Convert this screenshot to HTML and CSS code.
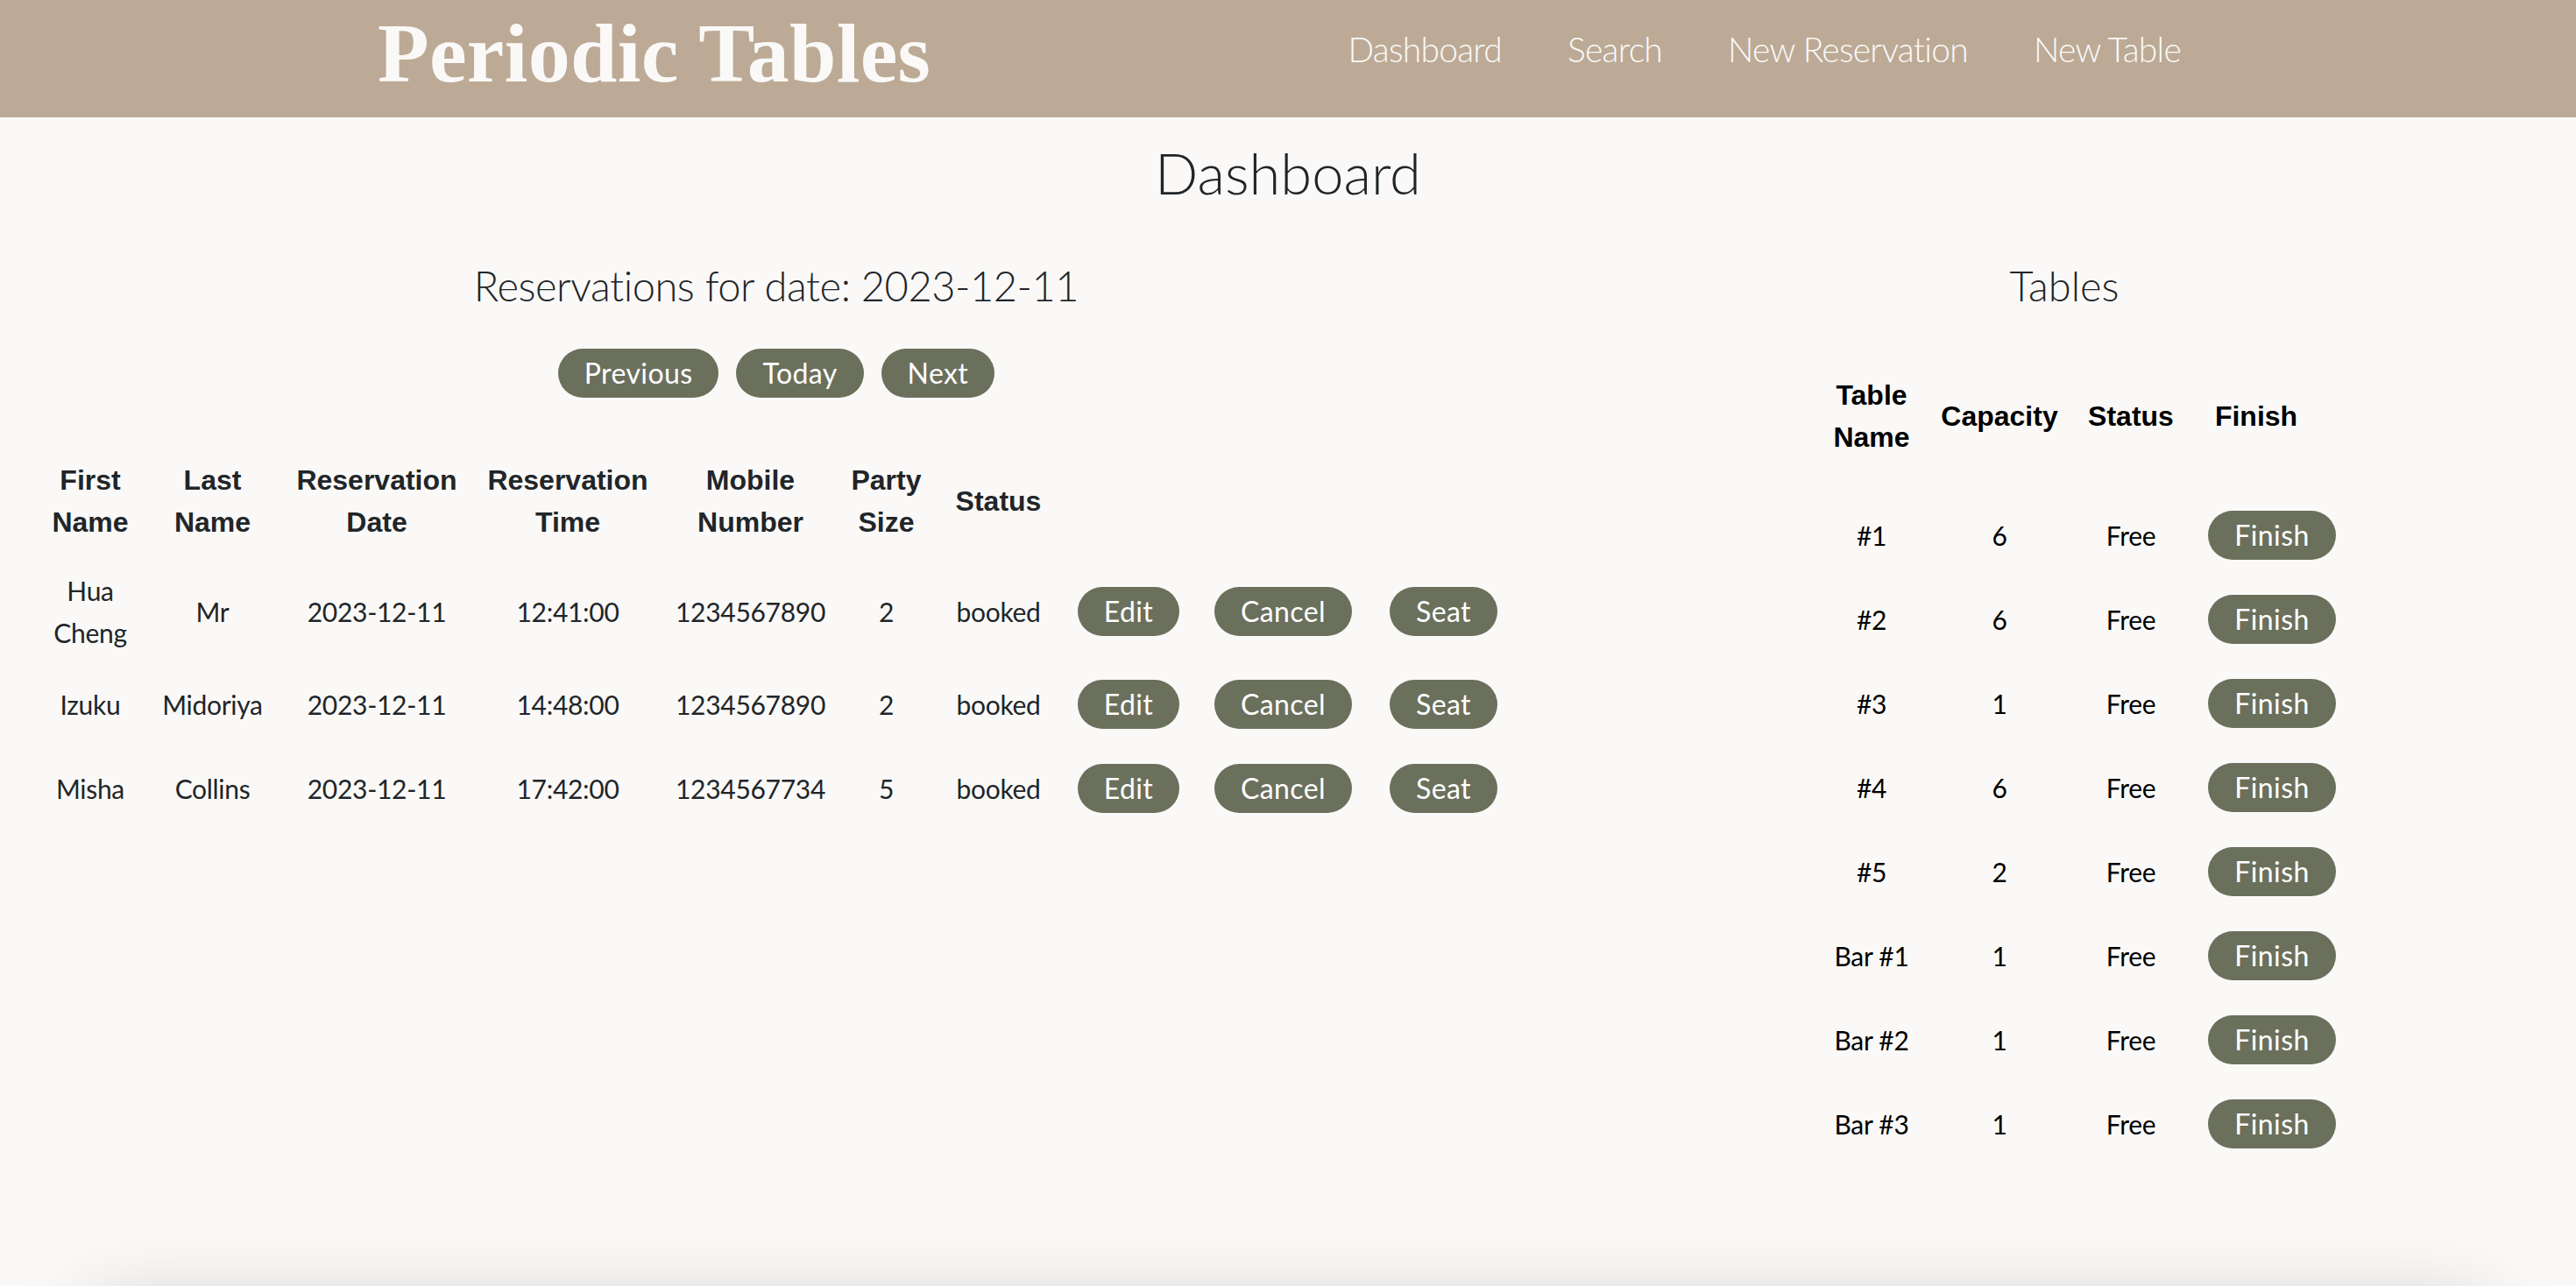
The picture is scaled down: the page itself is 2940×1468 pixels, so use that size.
FILE: index.html
```html
<!DOCTYPE html>
<html lang="en">
<head>
<meta charset="utf-8">
<title>Periodic Tables</title>
<link rel="stylesheet" href="styles.css">
</head>
<body>
<header class="navbar">
  <div class="brand">Periodic Tables</div>
  <nav class="nav-links">
    <a class="nav-link" href="#">Dashboard</a>
    <a class="nav-link" href="#">Search</a>
    <a class="nav-link" href="#">New Reservation</a>
    <a class="nav-link" href="#">New Table</a>
  </nav>
</header>
<main class="page">
  <h1 class="page-title">Dashboard</h1>
  <div class="columns">
    <section class="col-res">
      <h2 class="section-title">Reservations for date: 2023-12-11</h2>
      <div class="date-nav">
        <button class="btn">Previous</button>
        <button class="btn">Today</button>
        <button class="btn">Next</button>
      </div>
      <table class="res-table">
        <colgroup>
          <col class="rc1"><col class="rc2"><col class="rc3"><col class="rc4"><col class="rc5">
          <col class="rc6"><col class="rc7"><col class="rc8"><col class="rc9"><col class="rc10">
        </colgroup>
        <thead>
          <tr>
            <th>First Name</th><th>Last Name</th><th>Reservation Date</th><th>Reservation Time</th>
            <th>Mobile Number</th><th>Party Size</th><th>Status</th><th></th><th></th><th></th>
          </tr>
        </thead>
        <tbody>
          <tr class="first-row">
            <td>Hua Cheng</td><td>Mr</td><td>2023-12-11</td><td>12:41:00</td><td>1234567890</td><td>2</td><td>booked</td>
            <td><button class="btn cell-btn">Edit</button></td>
            <td><button class="btn cell-btn">Cancel</button></td>
            <td><button class="btn cell-btn">Seat</button></td>
          </tr>
          <tr>
            <td>Izuku</td><td>Midoriya</td><td>2023-12-11</td><td>14:48:00</td><td>1234567890</td><td>2</td><td>booked</td>
            <td><button class="btn cell-btn">Edit</button></td>
            <td><button class="btn cell-btn">Cancel</button></td>
            <td><button class="btn cell-btn">Seat</button></td>
          </tr>
          <tr>
            <td>Misha</td><td>Collins</td><td>2023-12-11</td><td>17:42:00</td><td>1234567734</td><td>5</td><td>booked</td>
            <td><button class="btn cell-btn">Edit</button></td>
            <td><button class="btn cell-btn">Cancel</button></td>
            <td><button class="btn cell-btn">Seat</button></td>
          </tr>
        </tbody>
      </table>
    </section>
    <section class="col-tables">
      <h2 class="section-title">Tables</h2>
      <table class="tables-table">
        <colgroup>
          <col class="tc1"><col class="tc2"><col class="tc3"><col class="tc4">
        </colgroup>
        <thead>
          <tr><th>Table Name</th><th>Capacity</th><th>Status</th><th class="finish-head">Finish</th></tr>
        </thead>
        <tbody>
          <tr><td>#1</td><td>6</td><td>Free</td><td class="finish-cell"><button class="btn cell-btn">Finish</button></td></tr>
          <tr><td>#2</td><td>6</td><td>Free</td><td class="finish-cell"><button class="btn cell-btn">Finish</button></td></tr>
          <tr><td>#3</td><td>1</td><td>Free</td><td class="finish-cell"><button class="btn cell-btn">Finish</button></td></tr>
          <tr><td>#4</td><td>6</td><td>Free</td><td class="finish-cell"><button class="btn cell-btn">Finish</button></td></tr>
          <tr><td>#5</td><td>2</td><td>Free</td><td class="finish-cell"><button class="btn cell-btn">Finish</button></td></tr>
          <tr><td>Bar #1</td><td>1</td><td>Free</td><td class="finish-cell"><button class="btn cell-btn">Finish</button></td></tr>
          <tr><td>Bar #2</td><td>1</td><td>Free</td><td class="finish-cell"><button class="btn cell-btn">Finish</button></td></tr>
          <tr><td>Bar #3</td><td>1</td><td>Free</td><td class="finish-cell"><button class="btn cell-btn">Finish</button></td></tr>
        </tbody>
      </table>
    </section>
  </div>
</main>
<footer class="footer"></footer>
</body>
</html>
```

FILE: styles.css
```css
html, body {
  margin: 0;
  padding: 0;
}
body {
  background: #faf9f7;
  color: #212529;
  font-family: Lato, "Open Sans", sans-serif;
  overflow-x: hidden;
}

/* Navbar */
.navbar {
  height: 134px;
  background: #bcaa96;
  display: flex;
  align-items: flex-start;
  padding: 0 451px 0 431px;
}
.brand {
  margin-top: 13px;
  font-family: "Liberation Serif", "Times New Roman", serif;
  font-weight: 700;
  font-size: 96px;
  line-height: 96px;
  letter-spacing: 0.3px;
  color: #faf9f7;
  white-space: nowrap;
}
.nav-links {
  margin-left: auto;
  margin-top: 33px;
  display: flex;
  gap: 75px;
}
.nav-link {
  font-family: Lato, sans-serif;
  font-weight: 300;
  font-size: 39px;
  line-height: 1.2;
  letter-spacing: -0.75px;
  color: #fbfaf8;
  text-decoration: none;
  white-space: nowrap;
}

/* Main */
.page {
  min-height: calc(100vh - 134px);
}
.page-title {
  margin: 24px 0 0;
  text-align: center;
  font-family: Lato, sans-serif;
  font-weight: 300;
  font-size: 65px;
  line-height: 1.2;
  color: #212529;
}
.columns {
  display: flex;
  margin-top: 62px;
}
.col-res {
  flex: 0 0 1772px;
}
.col-tables {
  flex: 1 1 auto;
}
.section-title {
  margin: 0;
  text-align: center;
  font-family: Lato, sans-serif;
  font-weight: 300;
  font-size: 47px;
  line-height: 1.2;
  color: #212529;
}
.col-res .section-title {
  letter-spacing: -0.45px;
}

/* Buttons */
.btn {
  height: 56px;
  padding: 0 30px;
  border: none;
  border-radius: 28px;
  background: #6b705c;
  color: #ffffff;
  font-family: Lato, sans-serif;
  font-size: 32px;
  line-height: 56px;
  letter-spacing: 0.4px;
  cursor: pointer;
}
.date-nav {
  margin-top: 44px;
  display: flex;
  justify-content: center;
  gap: 20px;
}
.cell-btn {
  display: block;
  width: fit-content;
  margin: 5px auto;
}

/* Tables */
table {
  border-collapse: collapse;
  table-layout: fixed;
}
th {
  font-family: "Liberation Sans", Arial, sans-serif;
  font-weight: 700;
  font-size: 32px;
  line-height: 48px;
  padding: 15px 12px;
  text-align: center;
  vertical-align: middle;
}
td {
  font-family: Lato, sans-serif;
  font-size: 30px;
  line-height: 48px;
  padding: 15px 12px;
  text-align: center;
  vertical-align: middle;
  letter-spacing: -0.3px;
}

.res-table {
  width: 1688px;
  margin: 55px 0 0 42px;
  color: #212529;
}
.res-table .first-row td {
  padding-bottom: 10px;
}
.rc1 { width: 122px; }
.rc2 { width: 157px; }
.rc3 { width: 218px; }
.rc4 { width: 218px; }
.rc5 { width: 199px; }
.rc6 { width: 111px; }
.rc7 { width: 145px; }
.rc8 { width: 152px; }
.rc9 { width: 201px; }
.rc10 { width: 165px; }

.tables-table {
  width: 618px;
  margin: 58px 0 0 300px;
  color: #000000;
}
.tables-table th {
  padding-bottom: 40px;
}
.tables-table .finish-head {
  padding-right: 52px;
}
.tables-table .finish-cell {
  padding-left: 8px;
}
.tc1 { width: 128px; }
.tc2 { width: 164px; }
.tc3 { width: 136px; }
.tc4 { width: 190px; }

/* Footer below the fold, casting a soft shadow upward */
.footer {
  height: 200px;
  margin: 0 100px;
  background: #faf9f7;
  box-shadow: 0 0 90px rgba(0, 0, 0, 0.2);
}
```
